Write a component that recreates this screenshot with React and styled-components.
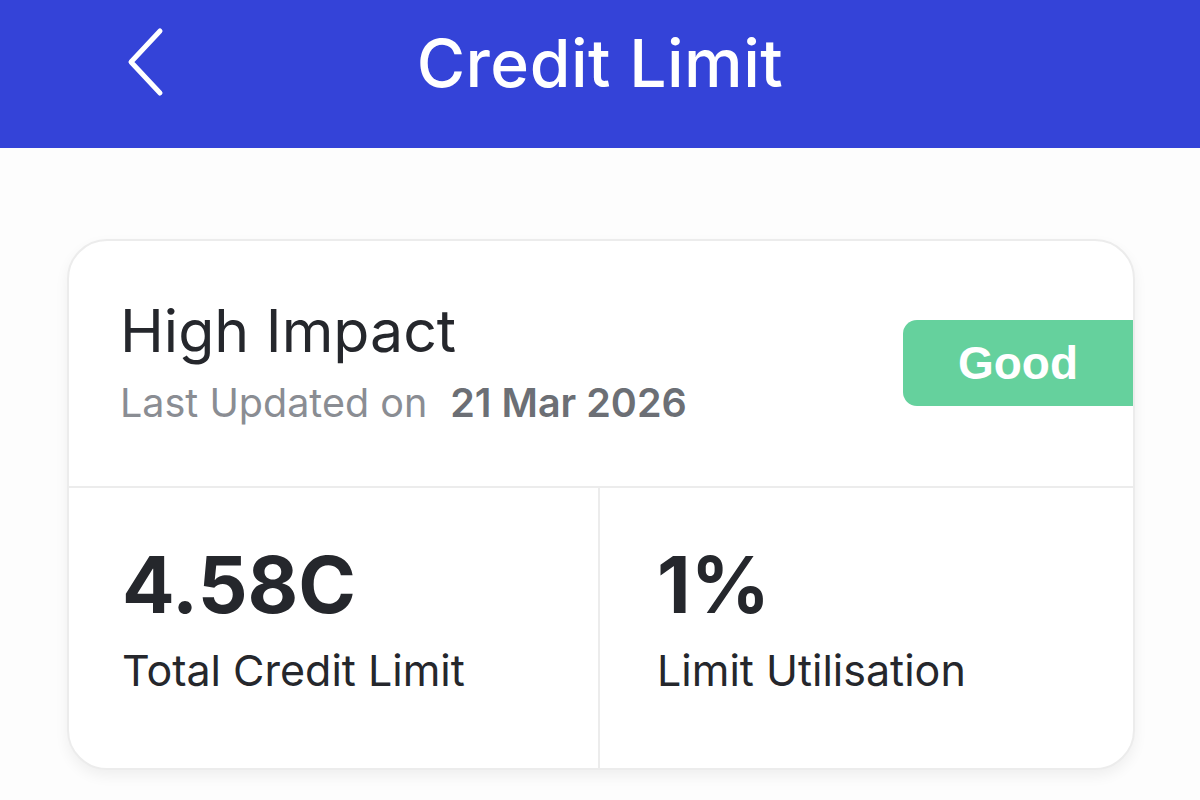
import styled, { createGlobalStyle } from "styled-components";

const GlobalStyle = createGlobalStyle`
  body {
    margin: 0;
    background: #fdfdfd;
    font-family: Inter, "Noto Sans", sans-serif;
  }
`;

const Page = styled.div`
  width: 1200px;
  height: 800px;
  overflow: hidden;
  background: #fdfdfd;
`;

const Header = styled.header`
  height: 148px;
  background: #3443d8;
  display: flex;
  align-items: center;
  justify-content: center;
  position: relative;
`;

const BackButton = styled.button`
  position: absolute;
  left: 120px;
  top: 24px;
  background: none;
  border: 0;
  padding: 0;
  width: 52px;
  height: 76px;
  display: flex;
  align-items: center;
  justify-content: center;
  cursor: pointer;
`;

const Title = styled.h1`
  margin: 0 0 22px;
  color: #fff;
  font-size: 66px;
  font-weight: 500;
  letter-spacing: 0.5px;
`;

const Card = styled.section`
  margin: 91px 0 0 67px;
  width: 1068px;
  height: 531px;
  box-sizing: border-box;
  background: #fff;
  border: 2px solid #ececec;
  border-radius: 40px;
  box-shadow: 0 6px 14px rgba(0, 0, 0, 0.06);
  overflow: hidden;
  display: flex;
  flex-direction: column;
`;

const TopRow = styled.div`
  height: 247px;
  display: flex;
  align-items: flex-start;
  justify-content: space-between;
  border-bottom: 2px solid #ececec;
  box-sizing: border-box;
  padding-left: 51px;
`;

const Info = styled.div`
  padding-top: 55px;
`;

const Name = styled.div`
  font-size: 59px;
  color: #25272c;
  line-height: 70px;
`;

const Updated = styled.div`
  margin-top: 14px;
  font-size: 39.5px;
  color: #8a8d93;
  line-height: 46px;
  span {
    font-weight: 600;
    color: #6c6f75;
    margin-left: 23px;
  }
`;

const Badge = styled.div`
  margin-top: 79px;
  width: 230px;
  height: 86px;
  background: #65d19d;
  border-radius: 14px 0 0 14px;
  display: flex;
  align-items: center;
  justify-content: center;
  color: #fff;
  font-family: "Liberation Sans", Arial, sans-serif;
  font-weight: 700;
  font-size: 46px;
`;

const Stats = styled.div`
  flex: 1;
  display: grid;
  grid-template-columns: 529px 1fr;
`;

const Stat = styled.div`
  padding: 52px 0 0 ${(p) => p.$pad}px;
  border-left: ${(p) => (p.$divider ? "2px solid #ececec" : "none")};
`;

const Value = styled.div`
  font-size: 78px;
  font-weight: 700;
  color: #25272c;
  line-height: 90px;
`;

const Label = styled.div`
  margin-top: 14px;
  font-size: 43px;
  color: #25272c;
  line-height: 52px;
`;

export default function App() {
  return (
    <Page>
      <GlobalStyle />
      <Header>
        <BackButton aria-label="Back">
          <svg width="40" height="70" viewBox="0 0 40 70">
            <polyline
              points="34,4 5,35 34,66"
              fill="none"
              stroke="#fff"
              strokeWidth="5"
              strokeLinecap="round"
              strokeLinejoin="round"
            />
          </svg>
        </BackButton>
        <Title>Credit Limit</Title>
      </Header>
      <Card>
        <TopRow>
          <Info>
            <Name>High Impact</Name>
            <Updated>
              Last Updated on<span>21 Mar 2026</span>
            </Updated>
          </Info>
          <Badge>Good</Badge>
        </TopRow>
        <Stats>
          <Stat $pad={53}>
            <Value>4.58C</Value>
            <Label>Total Credit Limit</Label>
          </Stat>
          <Stat $pad={57} $divider>
            <Value>1%</Value>
            <Label>Limit Utilisation</Label>
          </Stat>
        </Stats>
      </Card>
    </Page>
  );
}
